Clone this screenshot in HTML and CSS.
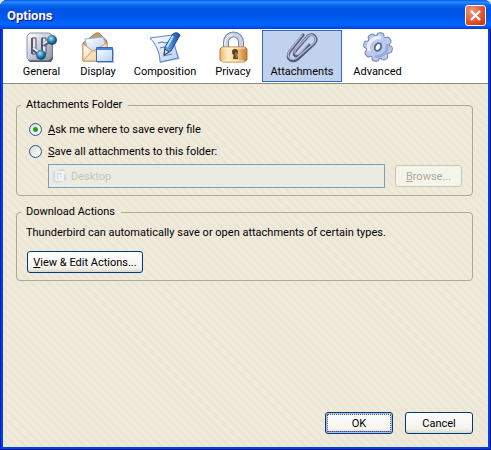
FILE: index.html
```html
<!DOCTYPE html>
<html lang="en">
<head>
<meta charset="utf-8">
<title>Options</title>
<link rel="stylesheet" href="styles.css">
</head>
<body>
<main class="window">
  <header class="titlebar">
    <h1>Options</h1>
    <button class="close" type="button" aria-label="Close">
      <svg viewBox="0 0 21 21" width="21" height="21"><path d="M6 6l9 9M15 6l-9 9" stroke="#fff" stroke-width="2.4" fill="none"/></svg>
    </button>
  </header>
  <nav class="toolbar">
    <button class="tool" type="button">
      <svg viewBox="0 0 32 32" width="32" height="32">
        <defs>
          <linearGradient id="plate" x1="0" y1="0" x2="1" y2="1"><stop offset="0" stop-color="#fff"/><stop offset=".5" stop-color="#c9ccdb"/><stop offset="1" stop-color="#8d91a8"/></linearGradient>
          <radialGradient id="ball" cx=".4" cy=".35"><stop offset="0" stop-color="#b5e6f5"/><stop offset=".55" stop-color="#4595bc"/><stop offset="1" stop-color="#13587f"/></radialGradient>
        </defs>
        <path d="M4 3h21l2 2v23l-2 3H4l-2-2V5z" fill="#555970"/>
        <path d="M4 2h19l3 2v22l-3 3H3l-2-2V5z" fill="url(#plate)" stroke="#8f92a6"/>
        <path d="M6 7h4v16H6zM16 7h4v16h-4z" fill="#e4e6f0" stroke="#4b4f64"/>
        <path d="M6 7v16M16 7v16" stroke="#555a72" stroke-width="2"/>
        <path d="M7 18l7 5M17 14l8-5" stroke="#555a6c" stroke-width="4"/>
        <path d="M7 17l7 5M17 13l8-5" stroke="#eef0fa" stroke-width="2"/>
        <circle cx="15" cy="24" r="5" fill="url(#ball)"/><circle cx="26" cy="9" r="5" fill="url(#ball)"/>
      </svg>
      <span>General</span>
    </button>
    <button class="tool" type="button">
      <svg viewBox="0 0 32 32" width="32" height="32">
        <defs><linearGradient id="env" x1="0" y1="0" x2="1" y2="1"><stop offset="0" stop-color="#fff"/><stop offset="1" stop-color="#f3c48c"/></linearGradient>
        <linearGradient id="pane" x1="0" y1="0" x2="1" y2="1"><stop offset="0" stop-color="#fff"/><stop offset="1" stop-color="#b4d0fa"/></linearGradient></defs>
        <path d="M1 12L14 2h3l8 8v20H1z" fill="#c39c74" stroke="#a8794c"/>
        <path d="M3 8l18-2 2 5v11H6z" fill="url(#pane)" stroke="#8fb0e8"/>
        <path d="M1 13l10 7 14-8v18H1z" fill="url(#env)" stroke="#d69a60"/>
        <path d="M1 30l10-11M11 19l6 3" stroke="#d69a60" fill="none"/>
        <path d="M15 18h17v14H15z" fill="#4c5b83" opacity=".4"/>
        <path d="M14.500 16.500h16v14h-16z" fill="url(#pane)" stroke="#3867bd"/>
        <path d="M15 17h15v2H15z" fill="#4b83e7"/>
      </svg>
      <span>Display</span>
    </button>
    <button class="tool" type="button">
      <svg viewBox="0 0 32 32" width="32" height="32">
        <defs><linearGradient id="pen"><stop offset="0" stop-color="#71b4f1"/><stop offset="1" stop-color="#154db5"/></linearGradient></defs>
        <path d="M1 8l21-3 9 23-20 4c0-9-4-20-10-24z" fill="#687994" opacity=".5"/>
        <path d="M1 7l22-3 6 23-18 4C11 22 7 13 1 7z" fill="url(#pane)" stroke="#6384cc"/>
        <path d="M9 12l4-1 3 1 4-1M11 17l4-1 3 1M14 25l9-2" stroke="#61749a" fill="none"/>
        <path d="M24 3q4-3 7 1L22 20l-7 4 1-8z" fill="url(#pen)" stroke="#1d4389"/>
        <path d="M24 5L18 16" stroke="#bde0ff" stroke-width="2"/><path d="M16 18l4 3-5 3z" fill="#eadab9" stroke="#343f60"/>
      </svg>
      <span>Composition</span>
    </button>
    <button class="tool" type="button">
      <svg viewBox="0 0 32 32" width="32" height="32">
        <defs><linearGradient id="gold"><stop offset="0" stop-color="#efb868"/><stop offset=".3" stop-color="#fff0cd"/><stop offset=".65" stop-color="#f2c583"/><stop offset="1" stop-color="#c27a2e"/></linearGradient></defs>
        <path d="M9 18v-7a7 7 0 0 1 15 0v7" fill="none" stroke="#7d879e" stroke-width="6"/>
        <path d="M9 18v-7a7 7 0 0 1 15 0v7" fill="none" stroke="#c5d2e8" stroke-width="4"/>
        <path d="M8 15v-4a8 8 0 0 1 8-7" fill="none" stroke="#fff"/>
        <path d="M5 16h23l2 2v11l-3 2H6l-3-2V18z" fill="url(#gold)" stroke="#b87936"/>
        <path d="M5 17h23M5 30h22" stroke="#fff3ca"/>
        <circle cx="18" cy="21" r="3" fill="#5b3c22"/><path d="M17 22h3l1 6h-5z" fill="#5b3c22"/><path d="M19 21v6" stroke="#b69b7c"/>
      </svg>
      <span>Privacy</span>
    </button>
    <button class="tool selected" type="button" aria-pressed="true">
      <svg viewBox="0 0 32 32" width="32" height="32">
        <g fill="none" stroke-linecap="round" stroke-linejoin="round">
          <path d="M17 4L4 20c-5 8 2 13 9 7L28 13c5-6-1-12-6-8L10 19c-4 5 0 8 4 5l9-10" stroke="#555b7a" stroke-width="3"/>
          <path d="M16 4L4 19c-5 8 2 12 8 7L28 12c4-5-1-10-6-7L10 18c-3 5 0 7 4 4l8-9" stroke="#b4bbd4" stroke-width="1.300"/>
        </g>
      </svg>
      <span>Attachments</span>
    </button>
    <button class="tool" type="button">
      <svg viewBox="0 0 32 32" width="32" height="32">
        <defs>
          <linearGradient id="gear" gradientUnits="userSpaceOnUse" x1="4" y1="4" x2="28" y2="28"><stop offset="0" stop-color="#edf3ff"/><stop offset=".5" stop-color="#b7c7ea"/><stop offset="1" stop-color="#8398ca"/></linearGradient>
          <path id="spoke" d="M13 4q0-2 3-2t3 2l1 5v14l-1 5q0 2-3 2t-3-2l-1-5V9z"/>
          <g id="cog"><circle cx="16" cy="16" r="11"/><use href="#spoke" transform="rotate(12 16 16)"/><use href="#spoke" transform="rotate(57 16 16)"/><use href="#spoke" transform="rotate(102 16 16)"/><use href="#spoke" transform="rotate(147 16 16)"/></g>
        </defs>
        <use href="#cog" fill="#7187bb" stroke="#7187bb" stroke-width="2"/>
        <circle cx="16" cy="16" r="11" fill="url(#gear)"/>
        <use href="#cog" fill="#bccbed"/>
        <path d="M7 20a10 10 0 0 1 12-13" fill="none" stroke="#eaf1ff" stroke-width="3"/>
        <path d="M25 13a10 10 0 0 1-12 12" fill="none" stroke="#98abd9" stroke-width="3"/>
        <ellipse cx="16" cy="16" rx="3" ry="4" transform="rotate(25 16 16)" fill="#fff" stroke="#586d9c" stroke-width="2"/>
      </svg>
      <span>Advanced</span>
    </button>
  </nav>
  <form class="pane">
    <fieldset>
      <legend>Attachments Folder</legend>
      <div class="choice"><input type="radio" name="dest" id="ask" checked><label for="ask"><u>A</u>sk me where to save every file</label></div>
      <div class="choice"><input type="radio" name="dest" id="all"><label for="all"><u>S</u>ave all attachments to this folder:</label></div>
      <div class="folder">
        <div class="field">
          <svg viewBox="0 0 16 16" width="16" height="16"><path d="M1 3l11-2 3 11-10 3-4-2z" fill="#ccdae4"/><path d="M4 4h7v8H4zM7 6v4h4M9 8l4-4" fill="none" stroke="#f8fafa" stroke-width="1.500"/></svg>
          <input type="text" value="Desktop" aria-label="Folder" disabled>
        </div>
        <button class="btn browse" type="button" disabled><u>B</u>rowse...</button>
      </div>
    </fieldset>
    <fieldset class="downloads">
      <legend>Download Actions</legend>
      <p>Thunderbird can automatically save or open attachments of certain types.</p>
      <button class="btn view" type="button"><u>V</u>iew &amp; Edit Actions...</button>
    </fieldset>
    <footer>
      <button class="btn ok" type="submit">OK</button>
      <button class="btn" type="button">Cancel</button>
    </footer>
  </form>
</main>
</body>
</html>
```
FILE: styles.css
```css
* { box-sizing: border-box; }
body { margin: 0; background: #ece9d8; }
body, button, input { font-family: Roboto, "DejaVu Sans Condensed", sans-serif; font-size: 11px; color: #000; }
.window {
  min-height: 100vh;
  display: flex;
  flex-direction: column;
  padding: 0 3px 3px;
  border-radius: 7px 7px 0 0;
  background: #0043e0;
  box-shadow: inset 1px 0 #0019cf, inset -1px -1px #00138c;
}
.titlebar {
  height: 29px;
  margin: 0 -3px;
  padding: 2px 5px 0 7px;
  display: flex;
  align-items: center;
  justify-content: space-between;
  border-radius: 7px 7px 0 0;
  background: linear-gradient(#0058e6, #2e8cff 2px, #0368f0 5px, #0054e3 9px, #0058ee 18px, #0066ff 24px, #005bff 26px, #003dd7);
}
h1 { margin: 0; font: bold 13px/20px Roboto, sans-serif; color: #fff; text-shadow: 1px 1px #0f1089; }
.close {
  width: 21px;
  height: 21px;
  padding: 0;
  border: 1px solid #fff;
  border-radius: 3px;
  background: radial-gradient(circle at 30% 25%, #f09a80, #e1502c 60%, #c03008);
}
.close svg { display: block; margin: -1px; }
.toolbar {
  display: grid;
  grid-template-columns: 57px 52px 78px 54px 80px 67px;
  gap: 2px;
  height: 55px;
  padding: 1px 10px;
  background: #fff;
  border-bottom: 1px solid #8b8b80;
}
.tool {
  display: flex;
  flex-direction: column;
  align-items: center;
  padding: 0;
  border: 1px solid transparent;
  background: none;
  line-height: 14px;
  white-space: nowrap;
}
.tool span { margin-top: 2px; }
.selected { background: #c1d2ee; border-color: #316ac5; }
.pane {
  flex: 1;
  display: flex;
  flex-direction: column;
  padding: 14px 15px 13px 13px;
  background: repeating-linear-gradient(45deg, #f0eadb 0 3px, #ece6d6 3px 6px);
}
fieldset { margin: 0; padding: 6px 10px 7px 9px; border: 1px solid #aca899; border-radius: 4px; min-width: 0; }
legend { margin-left: -5px; padding: 0 6px 0 5px; line-height: 14px; }
.choice { display: flex; align-items: center; gap: 6px; height: 22px; padding-left: 3px; }
.choice input {
  appearance: none;
  width: 13px;
  height: 13px;
  margin: 0;
  border: 1px solid #21578e;
  border-radius: 50%;
  background: linear-gradient(135deg, #dcdcd7, #fff);
}
.choice input:checked { background: radial-gradient(circle, #21a121 0 2px, #fff0 3px), linear-gradient(135deg, #dcdcd7, #fff); }
.folder { display: flex; align-items: center; gap: 10px; padding: 2px 0 0 22px; }
.field { flex: 1; display: flex; align-items: center; gap: 3px; height: 24px; padding: 0 3px; border: 1px solid #7f9db9; background: #ebebdf; }
.field input { flex: 1; min-width: 0; padding: 0; border: 0; background: none; color: #c8c6b8; }
.btn {
  min-width: 67px;
  height: 22px;
  padding: 0 5px;
  border: 1px solid #003c74;
  border-radius: 3px;
  background: linear-gradient(#fff, #f3f2ec 80%, #dcd6cc);
  white-space: nowrap;
}
.btn:disabled { color: #aca899; border-color: #c9c7ba; background: #f5f4ea; }
.downloads { margin-top: 9px; }
p { margin: 1px 0 11px; line-height: 14px; }
.view { min-width: 116px; margin-left: 1px; }
.ok { box-shadow: inset 0 0 0 1px #a6bdf0, inset 0 -2px #6982ee; outline: 1px dotted #555; outline-offset: -3px; }
footer { display: flex; justify-content: flex-end; gap: 12px; margin-top: auto; }
footer .btn { min-width: 68px; }
```
